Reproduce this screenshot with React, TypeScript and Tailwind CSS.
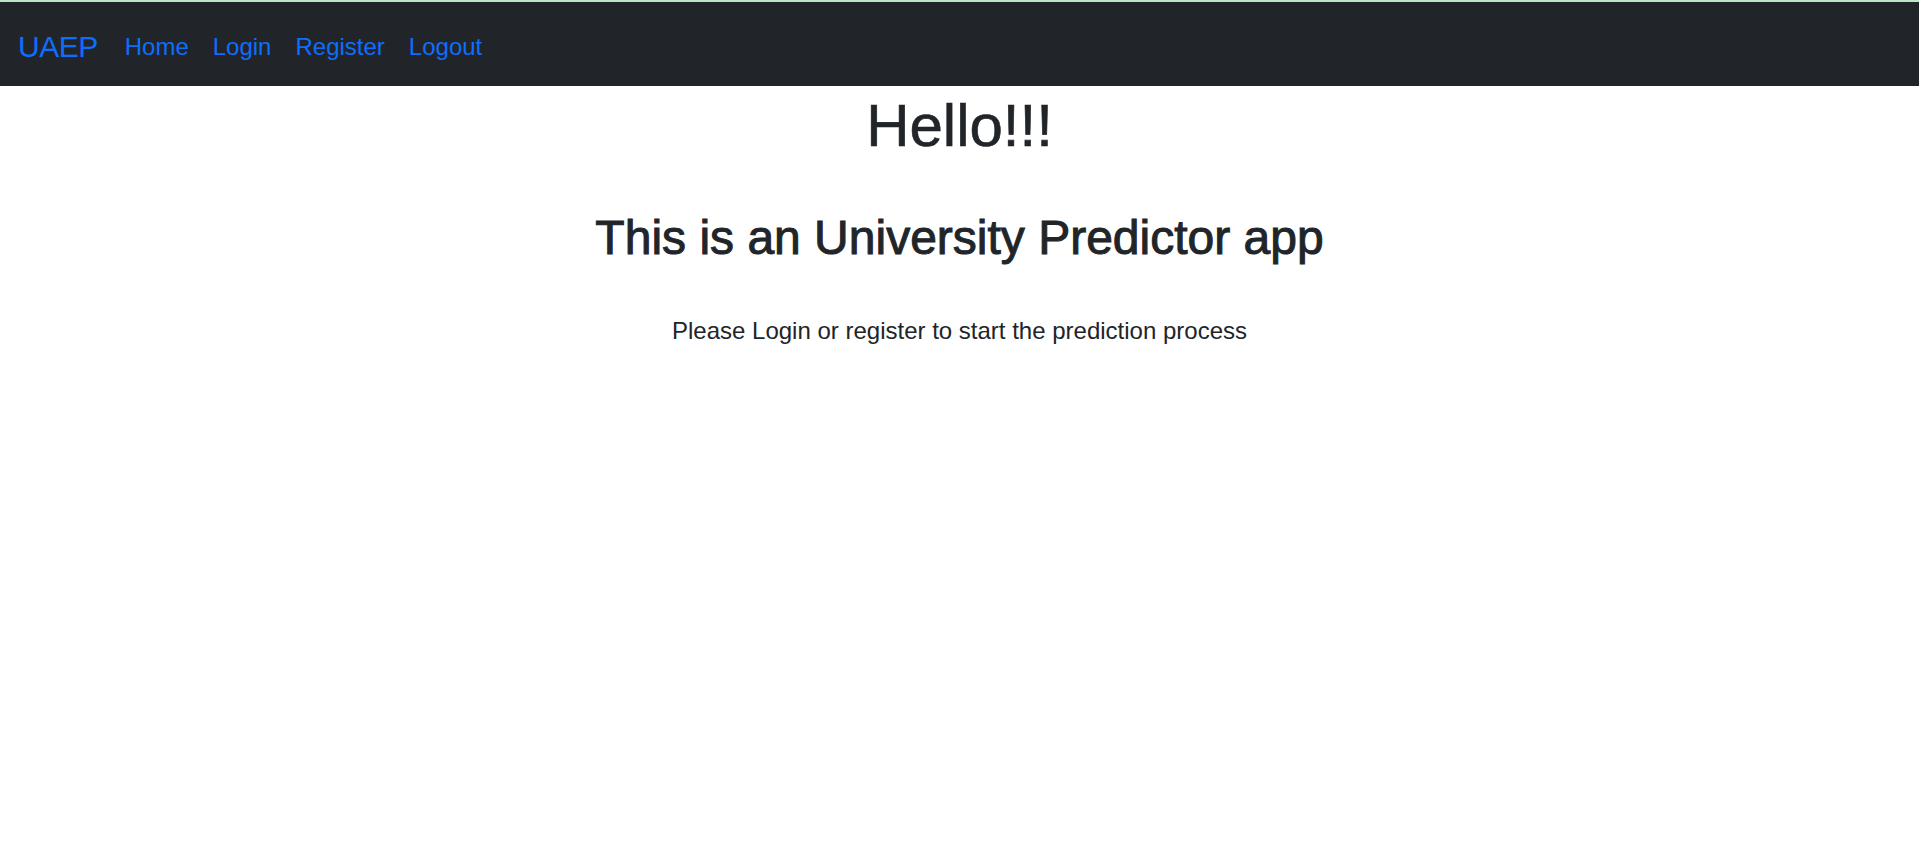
import React from "react";

export default function App() {
  const font = { fontFamily: '"Liberation Sans", Arial, sans-serif' };
  return (
    <div className="min-h-[867px] w-full bg-white text-[#212529]" style={font}>
      <div className="h-[2px] w-full bg-[#bde5c8]" />
      <nav className="flex h-[84px] w-full items-center bg-[#212529] px-[18px] pt-[5px]">
        <a href="#" className="mr-[15px] text-[30px] leading-[45px] tracking-[-0.5px] text-[#0d6efd] no-underline">
          UAEP
        </a>
        <ul className="flex items-center">
          {["Home", "Login", "Register", "Logout"].map((l) => (
            <li key={l}>
              <a href="#" className="block px-[12px] text-[24px] leading-[36px] text-[#0d6efd]">
                {l}
              </a>
            </li>
          ))}
        </ul>
      </nav>
      <main className="flex flex-col items-center text-center">
        <h1 className="mt-[4px] text-[60px] leading-[72px] font-medium [-webkit-text-stroke:0.6px_#212529]">
          Hello!!!
        </h1>
        <h2 className="mt-[47px] text-[48px] leading-[57.6px] font-medium [-webkit-text-stroke:1px_#212529]">
          This is an University Predictor app
        </h2>
        <p className="mt-[46px] text-[24px] leading-[36px]">
          Please Login or register to start the prediction process
        </p>
      </main>
    </div>
  );
}
